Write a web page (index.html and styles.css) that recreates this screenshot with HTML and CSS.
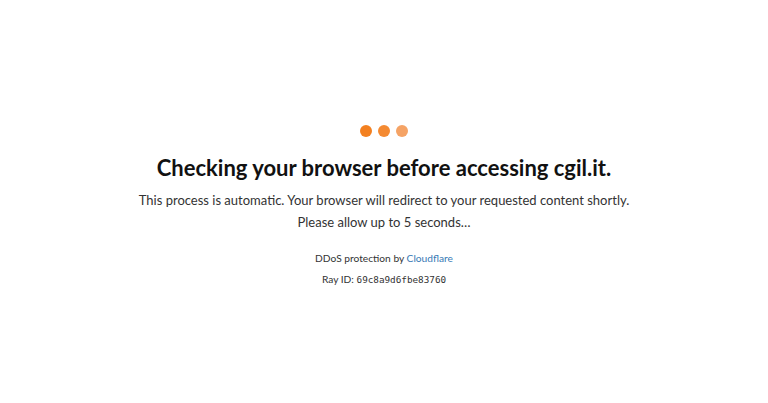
FILE: index.html
```html
<!DOCTYPE html>
<html lang="en">
<head>
  <meta charset="UTF-8">
  <meta name="viewport" content="width=device-width, initial-scale=1.0">
  <link rel="stylesheet" href="styles.css">
</head>
<body>
<div class="page">
  <div class="dots">
    <span class="dot dot-1"></span>
    <span class="dot dot-2"></span>
    <span class="dot dot-3"></span>
  </div>
  <h1>Checking your browser before accessing cgil.it.</h1>
  <p class="lead">This process is automatic. Your browser will redirect to your requested content shortly.</p>
  <p class="lead">Please allow up to 5 seconds&hellip;</p>
  <div class="footer">
    <p>DDoS protection by <a href="#">Cloudflare</a></p>
    <p class="ray">Ray ID: <code>69c8a9d6fbe83760</code></p>
  </div>
</div>
</body>
</html>
```

FILE: styles.css
```css
body {
  font-family: Lato, "Noto Sans", sans-serif;
  background-color: #fff;
  color: #222;
  margin: 0;
  padding: 0;
}
.page {
  text-align: center;
  padding-top: 125px;
}
.dots {
  display: flex;
  justify-content: center;
  gap: 6px;
}
.dot {
  width: 12px;
  height: 12px;
  border-radius: 50%;
}
.dot-1 {
  background-color: #f38020;
}
.dot-2 {
  background-color: #f48a32;
}
.dot-3 {
  background-color: #f5a365;
}
h1 {
  font-size: 22px;
  font-weight: 700;
  color: #111;
  margin: 18px 0 8px;
  line-height: 26px;
}
.lead {
  font-size: 13px;
  line-height: 22px;
  margin: 0;
  color: #333;
}
.footer {
  margin-top: 15px;
  font-size: 10.2px;
  color: #333;
}
.footer p {
  margin: 0;
  line-height: 21px;
}
.footer a {
  color: #3879b5;
  text-decoration: none;
}
code {
  font-family: "DejaVu Sans Mono", monospace;
  font-size: 9.3px;
}
```
